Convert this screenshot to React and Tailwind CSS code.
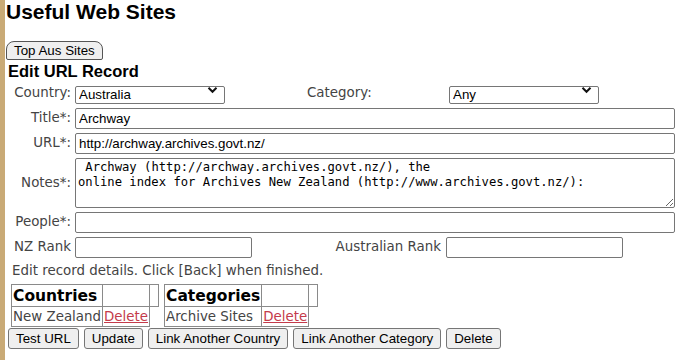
import React from 'react';

const lbl = "font-['DejaVu_Sans',sans-serif] text-[13.4px] text-[#444]";
const field = "h-[21px] border border-[#767676] rounded-[2px] bg-white px-[3px] font-['Liberation_Sans',Arial,sans-serif] text-[13.33px] text-black outline-none";

const Chevron = () => (
  <svg width="11" height="8" viewBox="0 0 11 8" className="absolute right-[7px] top-[5px] pointer-events-none">
    <path d="M1.5 1.8 L5.5 5.8 L9.5 1.8" fill="none" stroke="#111" strokeWidth="2" />
  </svg>
);

const Select = ({ value, className }) => (
  <div className={`relative ${className}`}>
    <select
      defaultValue={value}
      className="appearance-none w-full h-[18px] border border-[#767676] rounded-[2px] bg-white pl-[3px] font-['Liberation_Sans',Arial,sans-serif] text-[13.33px] leading-[16px] text-black outline-none"
    >
      <option>{value}</option>
    </select>
    <Chevron />
  </div>
);

const LinkTable = ({ title, item }) => (
  <table className="border-collapse">
    <tbody>
      <tr className="h-[22px]">
        <td className="border border-[#8a8a8a] px-[1px] font-['DejaVu_Sans',sans-serif] font-bold text-[15.5px] leading-[18px] text-black">{title}</td>
        <td className="border border-[#8a8a8a] w-[47px]"></td>
        <td className="border border-[#8a8a8a] w-[9px]"></td>
      </tr>
      <tr className="h-[20px]">
        <td className={`border border-[#8a8a8a] px-[1px] ${lbl} leading-[16px]`}>{item}</td>
        <td className="border border-[#8a8a8a] px-[1px] font-['DejaVu_Sans',sans-serif] text-[13.4px] leading-[16px]">
          <a href="#" className="text-[#c43b4b] underline">Delete</a>
        </td>
      </tr>
    </tbody>
  </table>
);

const Row = ({ label, children, className = '' }) => (
  <div className={`flex items-center ${className}`}>
    <div className={`w-[69px] shrink-0 pr-[4px] text-right ${lbl}`}>{label}</div>
    {children}
  </div>
);

export default function App() {
  const btn = "h-[21px] px-[7px] border border-[#767676] rounded-[3px] bg-[#efefef] font-['Liberation_Sans',Arial,sans-serif] text-[13.33px] text-black";
  return (
    <div className="flex min-h-[360px] bg-white">
      <div className="w-[5px] shrink-0 bg-[#c9aa76]" />
      <div className="flex-1 pl-[1px] pr-[6px]">
        <h1 className="font-['Liberation_Sans',Arial,sans-serif] font-bold text-[21px] leading-[24px] text-black">Useful Web Sites</h1>
        <div className="mt-[13px]">
          <button className="h-[19px] px-[7px] border border-[#555] rounded-t-[8px] rounded-b-[2px] bg-[#efefef] font-['Liberation_Sans',Arial,sans-serif] text-[13.33px] leading-[15px] text-black">Top Aus Sites</button>
        </div>
        <h2 className="ml-[2px] font-['Liberation_Sans',Arial,sans-serif] font-bold text-[16.5px] leading-[20px] text-black">Edit URL Record</h2>

        <div className="mt-[3px] flex flex-col gap-[4px]">
          <Row label="Country:" className="h-[18px]">
            <Select value="Australia" className="w-[150px]" />
            <div className={`ml-[82px] w-[142px] ${lbl}`}>Category:</div>
            <Select value="Any" className="w-[150px]" />
          </Row>
          <Row label="Title*:" className="mt-[2px]">
            <input className={`${field} flex-1`} defaultValue="Archway" />
          </Row>
          <Row label="URL*:">
            <input className={`${field} flex-1`} defaultValue="http://archway.archives.govt.nz/" />
          </Row>
          <Row label="Notes*:">
            <textarea
              className="flex-1 h-[50px] border border-[#767676] rounded-[2px] bg-white px-[2px] py-[1px] font-['DejaVu_Sans_Mono',monospace] text-[12.2px] leading-[15px] text-black outline-none"
              defaultValue={" Archway (http://archway.archives.govt.nz/), the\nonline index for Archives New Zealand (http://www.archives.govt.nz/):"}
            />
          </Row>
          <Row label="People*:">
            <input className={`${field} flex-1`} defaultValue="" />
          </Row>
          <Row label="NZ Rank">
            <input className={`${field} w-[177px]`} defaultValue="" />
            <div className={`w-[194px] pr-[5px] text-right ${lbl}`}>Australian Rank</div>
            <input className={`${field} w-[177px]`} defaultValue="" />
          </Row>
        </div>

        <p className={`ml-[6px] mt-[5px] leading-[16px] ${lbl}`}>Edit record details. Click [Back] when finished.</p>

        <div className="ml-[5px] mt-[5px] flex items-start gap-[5px]">
          <LinkTable title="Countries" item="New Zealand" />
          <LinkTable title="Categories" item="Archive Sites " />
        </div>

        <div className="ml-[2px] mt-[1px] flex gap-[5px]">
          <button className={btn}>Test URL</button>
          <button className={btn}>Update</button>
          <button className={btn}>Link Another Country</button>
          <button className={btn}>Link Another Category</button>
          <button className={btn}>Delete</button>
        </div>
      </div>
    </div>
  );
}
